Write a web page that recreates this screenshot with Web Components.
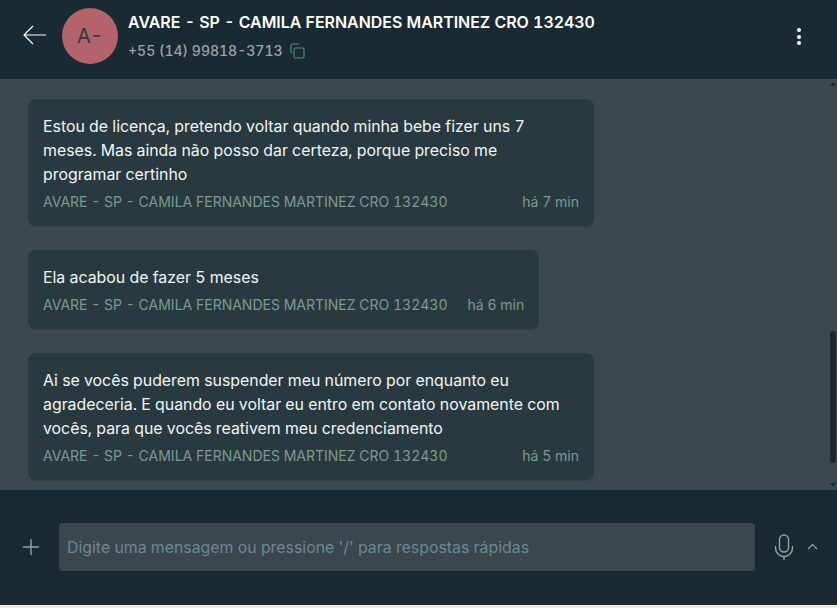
<!DOCTYPE html>
<html>
<head>
<meta charset="utf-8">
<style>
html, body { margin: 0; height: 100%; background: #efe9d6; overflow: hidden; }
body { font-family: Inter, "Noto Sans", sans-serif; font-variant-numeric: tabular-nums; }
</style>
</head>
<body>
<chat-app></chat-app>
<script>
class ChatHeader extends HTMLElement {
    constructor() {
        super()
        const shadow = this.attachShadow({ mode: 'open' })
        shadow.innerHTML = `
        <style>
        :host { display:flex; align-items:flex-start; height:79px; background:#1a2a32; flex:none; color:#fff; }
        .back { width:24px; height:24px; margin:23px 0 0 23px; flex:none; }
        .avatar { width:56px; height:56px; margin:8px 0 0 15px; border-radius:50%; background:#b2636c; color:#2f3a46; display:flex; align-items:center; justify-content:center; font-size:20px; flex:none; }
        .info { margin:13px 0 0 10px; flex:1; }
        .name { font-size:15.93px; font-weight:600; line-height:20px; white-space:nowrap; }
        .phone { display:flex; align-items:center; gap:6px; margin-top:9px; font-size:14px; font-weight:500; line-height:18px; color:#9aa3a8; }
        .more { width:4px; margin:28px 36px 0 0; display:flex; flex-direction:column; gap:2.5px; flex:none; }
        .more i { width:4px; height:4px; border-radius:50%; background:#fff; }
        </style>
        <svg class="back" viewBox="0 0 24 24" fill="none" stroke="#fff" stroke-width="1.2"><path d="M23 12H1M10 3l-9 9 9 9"/></svg>
        <div class="avatar">A-</div>
        <div class="info">
            <div class="name"><slot name="name"></slot></div>
            <div class="phone"><slot name="phone"></slot>
                <svg width="16" height="16" viewBox="0 0 16 16" fill="none" stroke="#4f8f6f" stroke-width="1.2"><rect x="5" y="5" width="10" height="10" rx="1.5"/><path d="M2 10.5V2.5A1.5 1.5 0 0 1 3.5 1H10"/></svg>
            </div>
        </div>
        <div class="more"><i></i><i></i><i></i></div>`
    }
}
customElements.define('chat-header', ChatHeader)

class ChatBubble extends HTMLElement {
    constructor() {
        super()
        const shadow = this.attachShadow({ mode: 'open' })
        shadow.innerHTML = `
        <style>
        :host { display:block; align-self:flex-start; box-sizing:border-box; padding:16px 15px 14px; background:#283a40; border-radius:8px; box-shadow:0 1px 1px rgba(0,0,0,.12); }
        .text { font-size:15.87px; line-height:24px; color:#f2f5f6; }
        .meta { display:flex; justify-content:space-between; gap:20px; margin-top:5px; font-size:14px; line-height:20px; color:#7c9a90; white-space:nowrap; }
        </style>
        <div class="text"><slot></slot></div>
        <div class="meta"><slot name="author"></slot><slot name="time"></slot></div>`
    }
}
customElements.define('chat-bubble', ChatBubble)

class ChatScroller extends HTMLElement {
    constructor() {
        super()
        const shadow = this.attachShadow({ mode: 'open' })
        shadow.innerHTML = `
        <style>
        :host { display:flex; flex-direction:column; gap:24px; flex:1; min-height:0; padding:20px 0 0 28px; background:#3a484f; position:relative; box-sizing:border-box; overflow:hidden; }
        .arrow { position:absolute; right:1px; width:0; height:0; border-left:3px solid transparent; border-right:3px solid transparent; }
        .up { top:3px; border-bottom:4px solid #1a2a32; }
        .down { bottom:3px; border-top:4px solid #1a2a32; }
        .thumb { position:absolute; right:1px; top:252px; width:6px; height:132px; border-radius:3px; background:#1a2a32; }
        </style>
        <slot></slot>
        <div class="arrow up"></div>
        <div class="thumb"></div>
        <div class="arrow down"></div>`
    }
}
customElements.define('chat-scroller', ChatScroller)

class ChatComposer extends HTMLElement {
    constructor() {
        super()
        const shadow = this.attachShadow({ mode: 'open' })
        shadow.innerHTML = `
        <style>
        :host { display:flex; align-items:flex-start; height:115px; background:#1a2a32; flex:none; box-sizing:border-box; padding-top:32px; }
        .plus { width:16px; height:16px; margin:17px 0 0 23px; flex:none; }
        .input { box-sizing:border-box; width:698px; height:50px; margin-left:19px; padding:0 8px; background:#3a474e; border:1px solid #17242b; border-radius:4px; display:flex; align-items:center; font-size:15.87px; color:#6f8792; flex:none; }
        .mic { width:20px; height:26px; margin:12px 0 0 18px; flex:none; }
        .chev { width:11px; height:7px; margin:21px 0 0 13px; flex:none; }
        </style>
        <svg class="plus" viewBox="0 0 16 16" stroke="#8fa5a3" stroke-width="1.4" fill="none"><path d="M8 0v16M0 8h16"/></svg>
        <div class="input"><slot></slot></div>
        <svg class="mic" viewBox="0 0 20 26" fill="none" stroke="#8fa5a3" stroke-width="1.4"><rect x="5.5" y="1" width="9" height="17" rx="4.5"/><path d="M1.5 12v2a8.5 8.5 0 0 0 17 0v-2M10 22.5V26"/></svg>
        <svg class="chev" viewBox="0 0 11 7" fill="none" stroke="#8fa5a3" stroke-width="1.2"><path d="M1 6l4.5-4.5L10 6"/></svg>`
    }
}
customElements.define('chat-composer', ChatComposer)

class ChatApp extends HTMLElement {
    constructor() {
        super()
        const shadow = this.attachShadow({ mode: 'open' })
        const author = 'AVARE - SP - CAMILA FERNANDES MARTINEZ CRO 132430'
        shadow.innerHTML = `
        <style>
        :host { display:flex; flex-direction:column; height:605px; width:837px; }
        </style>
        <chat-header>
            <span slot="name">${author}</span>
            <span slot="phone">+55 (14) 99818-3713</span>
        </chat-header>
        <chat-scroller>
            <chat-bubble style="width:566px">Estou de licença, pretendo voltar quando minha bebe fizer uns 7 meses. Mas ainda não posso dar certeza, porque preciso me programar certinho
                <span slot="author">${author}</span><span slot="time">há 7 min</span></chat-bubble>
            <chat-bubble>Ela acabou de fazer 5 meses
                <span slot="author">${author}</span><span slot="time">há 6 min</span></chat-bubble>
            <chat-bubble style="width:566px">Ai se vocês puderem suspender meu número por enquanto eu agradeceria. E quando eu voltar eu entro em contato novamente com vocês, para que vocês reativem meu credenciamento
                <span slot="author">${author}</span><span slot="time">há 5 min</span></chat-bubble>
        </chat-scroller>
        <chat-composer>Digite uma mensagem ou pressione '/' para respostas rápidas</chat-composer>`
    }
}
customElements.define('chat-app', ChatApp)
</script>
</body>
</html>
